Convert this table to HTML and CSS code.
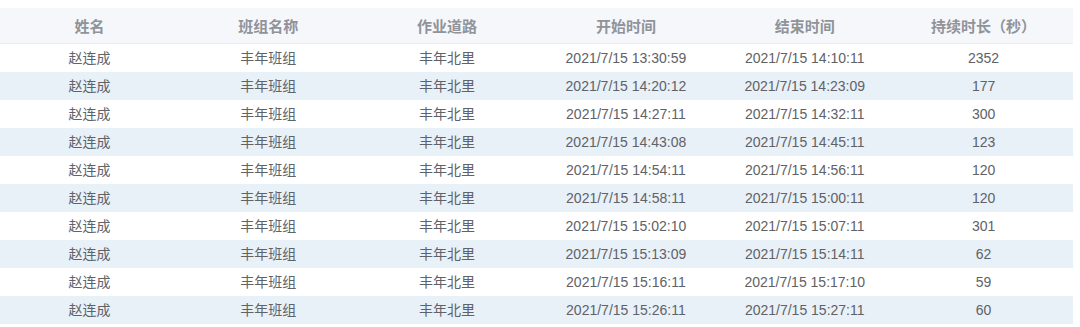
FILE: index.html
```html
<!DOCTYPE html>
<html lang="zh-CN">
<head>
<meta charset="utf-8">
<link rel="stylesheet" href="styles.css">
</head>
<body>
<div class="wrap">
<table class="grid">
<thead>
<tr><th>姓名</th><th>班组名称</th><th>作业道路</th><th>开始时间</th><th>结束时间</th><th>持续时长（秒）</th></tr>
</thead>
<tbody>
<tr><td>赵连成</td><td>丰年班组</td><td>丰年北里</td><td>2021/7/15 13:30:59</td><td>2021/7/15 14:10:11</td><td>2352</td></tr>
<tr><td>赵连成</td><td>丰年班组</td><td>丰年北里</td><td>2021/7/15 14:20:12</td><td>2021/7/15 14:23:09</td><td>177</td></tr>
<tr><td>赵连成</td><td>丰年班组</td><td>丰年北里</td><td>2021/7/15 14:27:11</td><td>2021/7/15 14:32:11</td><td>300</td></tr>
<tr><td>赵连成</td><td>丰年班组</td><td>丰年北里</td><td>2021/7/15 14:43:08</td><td>2021/7/15 14:45:11</td><td>123</td></tr>
<tr><td>赵连成</td><td>丰年班组</td><td>丰年北里</td><td>2021/7/15 14:54:11</td><td>2021/7/15 14:56:11</td><td>120</td></tr>
<tr><td>赵连成</td><td>丰年班组</td><td>丰年北里</td><td>2021/7/15 14:58:11</td><td>2021/7/15 15:00:11</td><td>120</td></tr>
<tr><td>赵连成</td><td>丰年班组</td><td>丰年北里</td><td>2021/7/15 15:02:10</td><td>2021/7/15 15:07:11</td><td>301</td></tr>
<tr><td>赵连成</td><td>丰年班组</td><td>丰年北里</td><td>2021/7/15 15:13:09</td><td>2021/7/15 15:14:11</td><td>62</td></tr>
<tr><td>赵连成</td><td>丰年班组</td><td>丰年北里</td><td>2021/7/15 15:16:11</td><td>2021/7/15 15:17:10</td><td>59</td></tr>
<tr><td>赵连成</td><td>丰年班组</td><td>丰年北里</td><td>2021/7/15 15:26:11</td><td>2021/7/15 15:27:11</td><td>60</td></tr>
</tbody>
</table>
</div>
</body>
</html>
```

FILE: styles.css
```css
html, body {
  margin: 0;
  padding: 0;
  background: #ffffff;
}
body {
  font-family: "Liberation Sans", Arial, "Noto Sans CJK SC", sans-serif;
  font-size: 14px;
  color: #606266;
}
.wrap {
  padding-top: 8px;
  width: 1073px;
}
.grid {
  width: 1073px;
  border-collapse: collapse;
  table-layout: fixed;
}
.grid th {
  height: 35px;
  padding: 0;
  background: #f5f7fa;
  border-bottom: 1px solid #e9ecf2;
  color: #909399;
  font-weight: bold;
  font-size: 15px;
  text-align: center;
  vertical-align: middle;
}
.grid td {
  height: 28px;
  padding: 0;
  text-align: center;
  vertical-align: middle;
  line-height: 28px;
}
.grid tbody tr:nth-child(even) td {
  background: #e8f0f8;
}
```
